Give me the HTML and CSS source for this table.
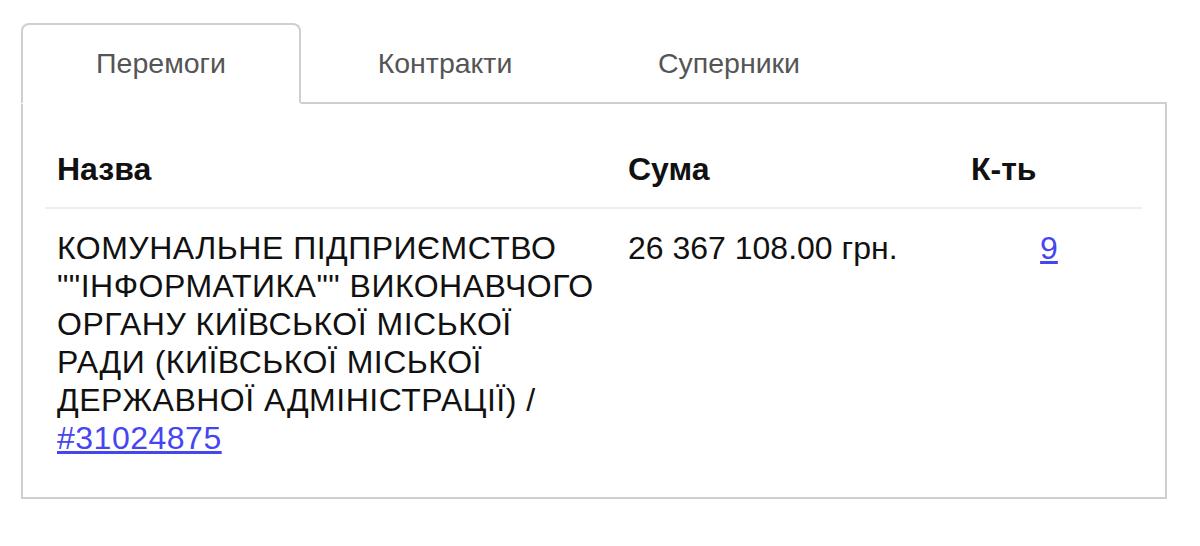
FILE: index.html
```html
<!DOCTYPE html>
<html lang="uk">
<head>
<meta charset="utf-8">
<link rel="stylesheet" href="styles.css">
</head>
<body>
<div class="wrap">
  <ul class="tabs">
    <li class="tab active"><a href="#">Перемоги</a></li>
    <li class="tab"><a href="#">Контракти</a></li>
    <li class="tab"><a href="#">Суперники</a></li>
  </ul>
  <div class="panel">
    <table class="table">
      <thead>
        <tr>
          <th class="c-name">Назва</th>
          <th class="c-sum">Сума</th>
          <th class="c-cnt">К-ть</th>
        </tr>
      </thead>
      <tbody>
        <tr>
          <td class="c-name">КОМУНАЛЬНЕ ПІДПРИЄМСТВО ""ІНФОРМАТИКА"" ВИКОНАВЧОГО ОРГАНУ КИЇВСЬКОЇ МІСЬКОЇ РАДИ (КИЇВСЬКОЇ МІСЬКОЇ ДЕРЖАВНОЇ АДМІНІСТРАЦІЇ) / <a href="#">#31024875</a></td>
          <td class="c-sum">26 367 108.00 грн.</td>
          <td class="c-cnt num"><a href="#">9</a></td>
        </tr>
      </tbody>
    </table>
  </div>
</div>
</body>
</html>
```
FILE: styles.css
```css
* { box-sizing: border-box; }
html, body { margin: 0; padding: 0; background: #fff; }
body {
  font-family: "Liberation Sans", Arial, Helvetica, sans-serif;
  font-size: 32px;
  line-height: 38px;
  color: #111;
}
.wrap {
  padding: 23px 33px 0 21px;
  width: 1200px;
}
.tabs {
  list-style: none;
  margin: 0;
  padding: 0;
  display: flex;
  position: relative;
  z-index: 1;
  margin-bottom: -2px;
  font-size: 28.5px;
}
.tab {
  width: 284px;
}
.tab a {
  display: block;
  margin-right: 4px;
  height: 81px;
  padding: 19px 10px 22px;
  text-align: center;
  color: #555;
  text-decoration: none;
  border: 2px solid transparent;
  border-radius: 8px 8px 0 0;
}
.tab.active a {
  border-color: #cfcfcf;
  border-bottom-color: #fff;
  background: #fff;
}
.panel {
  border: 2px solid #cfcfcf;
  padding: 31px 23px 25px 22px;
}
.table {
  width: 100%;
  border-collapse: collapse;
}
.table th,
.table td {
  padding: 15px;
  text-align: left;
  vertical-align: top;
}
.table th {
  font-weight: bold;
  padding-bottom: 19px;
  border-bottom: 2px solid #eeeeee;
}
.table td {
  padding-top: 20px;
}
.table .c-name {
  width: 568px;
  padding-left: 12px;
}
.table td.c-name {
  padding-right: 10px;
  letter-spacing: 0.5px;
}
.c-sum { width: 343px; }
.table td.num { text-align: center; }
.table a { color: #4646f0; }
```
